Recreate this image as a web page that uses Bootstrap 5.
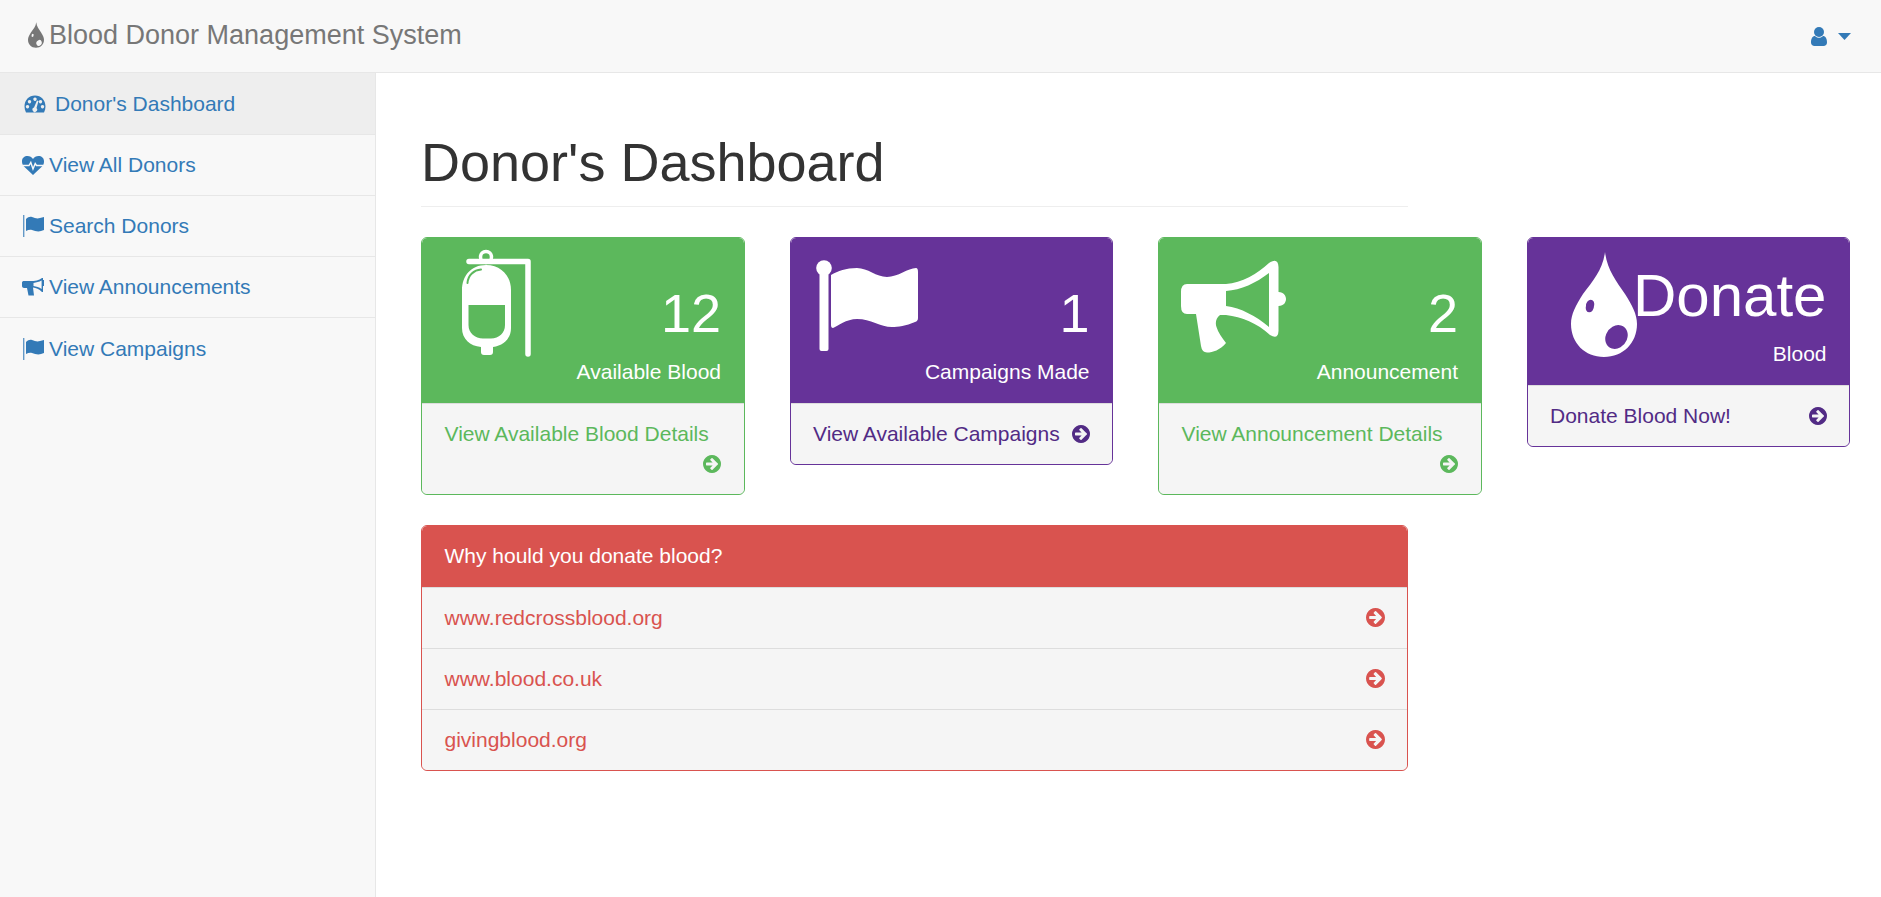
<!DOCTYPE html>
<html lang="en">
<head>
<meta charset="utf-8">
<title>Blood Donor Management System</title>
<link rel="stylesheet" href="https://cdn.jsdelivr.net/npm/bootstrap@5.3.0/dist/css/bootstrap.min.css">
<style>
html,body{height:100%}
body{font-family:"Liberation Sans",Arial,sans-serif;font-size:21px;line-height:30px;color:#333;background:#fff;overflow:hidden}
a{text-decoration:none}
.top-bar{height:73px;padding:0 30px 0 28px;background:#f8f8f8;border-bottom:1px solid #e7e7e7;flex-wrap:nowrap}
.brand-link{font-size:27px;line-height:30px;color:#777;gap:5px;padding:0 0 2px;margin:0}
.brand-link:hover{color:#777}
.brand-drop{width:16px;height:26px;fill:#777}
.user-link{color:#337ab7;gap:11px}
.shell{height:824px}
.side{width:376px;flex:none;background:#f8f8f8;border-right:1px solid #e7e7e7}
.side-item{display:flex;align-items:center;height:61px;padding:0 22px;background:transparent;color:#337ab7;border-radius:0}
.list-group-flush .side-item{border-style:solid;border-color:#e7e7e7;border-width:0 0 1px}
.side-item.now{background:#eee;padding-left:24px;height:62px}
.side-ico{fill:#337ab7;width:22px;height:24px;margin-right:5px;flex:none}
.now .side-ico{margin-right:9px}
.content{flex:1;padding:0 31px 0 45px;min-width:0}
.head-wrap{width:987px;margin:60px 0 30px;padding-bottom:13.5px;border-bottom:1px solid #eee}
.head-wrap h1{font-size:54px;line-height:59.4px;font-weight:500;margin:0;color:#333}
.tile-row{--bs-gutter-x:45px;--bs-gutter-y:0;align-items:flex-start}
.tile{margin-bottom:30px;border-radius:6px;overflow:hidden;background:#f5f5f5}
.tile-head{display:flex;justify-content:space-between;color:#fff;padding:15px 22.5px 15px 0;border:0;border-radius:0;min-height:165px}
.tile-head.head-short{min-height:147px}
.tile-ico{display:block;flex:none;fill:#fff}
.tile-txt{text-align:right;flex:1}
.stat-num{font-size:54px;line-height:87px;padding-top:17px}
.stat-big{font-size:60px;line-height:86px}
.tile-foot{padding:15px 22.5px;background:#f5f5f5;border-top:1px solid #ddd;border-radius:0;display:block}
.tile-foot .float-end{height:30px}
.arrow-ico{width:18px;height:18px;margin-top:6px;display:block;fill:currentColor}
.t-green{border:1px solid #5cb85c}
.t-green .tile-head{background:#5cb85c}
.t-green .tile-foot{color:#5cb85c}
.t-purple{border:1px solid #663399}
.t-purple .tile-head{background:#663399}
.t-purple .tile-foot{color:#522b85}
.ico-bag{width:120px;height:130px;margin:-13px 0 -12px 17px}
.ico-flag{width:102px;height:91px;margin:7px 0 0 25px}
.ico-horn{width:140px;height:120px;margin:-7px 0 0 10px}
.ico-drop{width:66px;height:105px;margin:-1px -10px 0 43px}
.why{width:987px;border:1px solid #d9534f;border-radius:6px;overflow:hidden;background:#f5f5f5}
.why-head{background:#d9534f;color:#fff;padding:15px 22.5px;height:61px;border:0;border-radius:0}
.why-item{display:flex;justify-content:space-between;align-items:center;height:61px;padding:0 22.5px;color:#d9534f;background:#f5f5f5;border-radius:0}
.list-group-flush .why-item{border-style:solid;border-color:#ddd;border-width:1px 0 0}
.why-item .arrow-ico{margin:0;width:19px;height:19px}
</style>
</head>
<body>
<svg width="0" height="0" class="position-absolute">
<defs>
<symbol id="i-arrow" viewBox="0 0 1536 1536"><path d="M1285 768q0-27-18-45l-91-91-362-362q-18-18-45-18t-45 18l-91 91q-18 18-18 45t18 45l189 189h-502q-26 0-45 19t-19 45v128q0 26 19 45t45 19h502l-189 189q-19 19-19 45t19 45l91 91q18 18 45 18t45-18l362-362 91-91q18-18 18-45zm251 0q0 209-103 385.5t-279.5 279.5-385.5 103-385.5-103-279.5-279.5-103-385.5 103-385.5 279.5-279.5 385.5-103 385.5 103 279.5 279.5 103 385.5z"/></symbol>
<symbol id="i-drop" viewBox="0 0 66 105"><path fill-rule="evenodd" d="M34 0C36 17 45 29 54 42C61 53 66 62 66 72C66 91 52 105 33 105C14 105 0 91 0 72C0 62 5 53 12 42C22 29 32 17 34 0ZM15 54a4 5.500 15 1 0 8 0a4 5.500 15 1 0-8 0ZM35 91a10.500 12.500 35 1 0 21-12a10.500 12.500 35 1 0-21 12Z"/></symbol>
<symbol id="i-flag-s" viewBox="0 0 22 24"><rect x="1" y="1" width="1.400" height="22" opacity=".75"/><path d="M4 5C6 3 8 2.500 10 3C13 4 15 5 18 4L22 3V16L19 17C16 18 13 17 10 16C8 15.500 6 16 4 17Z"/></symbol>
</defs>
</svg>

<nav class="navbar top-bar d-flex justify-content-between align-items-center">
  <a class="navbar-brand brand-link d-flex align-items-center" href="#">
    <svg class="brand-drop"><use href="#i-drop"/></svg>Blood Donor Management System
  </a>
  <a class="user-link d-flex align-items-center" href="#" aria-label="User menu">
    <svg width="16" height="19" viewBox="0 0 16 19" fill="currentColor"><circle cx="8" cy="5" r="5"/><path d="M0 15.500C0 11.500 1.500 9 4 9C5 10.200 6.500 10.800 8 10.800C9.500 10.800 11 10.200 12 9C14.500 9 16 11.500 16 15.500C16 17.800 14.500 19 12.500 19H3.500C1.500 19 0 17.800 0 15.500Z"/></svg>
    <svg width="13" height="7" viewBox="0 0 13 7" fill="currentColor"><path d="M0 0H13L6.500 7Z"/></svg>
  </a>
</nav>

<div class="shell d-flex">
  <aside class="side">
    <div class="list-group list-group-flush">
      <a class="list-group-item side-item now" href="#">
        <svg class="side-ico" viewBox="0 0 22 24"><path fill-rule="evenodd" d="M11 3.500C17 3.500 21.500 8 21.500 14.500C21.500 16.500 21 18.500 20 20.500H2C1 18.500 .5 16.500 .5 14.500C.5 8 5 3.500 11 3.500ZM11 5.500a1.700 1.700 0 1 0 .01 0ZM5.500 8a1.700 1.700 0 1 0 .01 0ZM16.500 8a1.700 1.700 0 1 0 .01 0ZM3.500 13a1.700 1.700 0 1 0 .01 0ZM18.500 13a1.700 1.700 0 1 0 .01 0ZM13 8.500L10 15.500a2.300 2.300 0 1 0 2.500 .6L14.500 9Z"/></svg>Donor's Dashboard
      </a>
      <a class="list-group-item side-item" href="#">
        <svg class="side-ico" viewBox="0 0 22 24"><path d="M11 22L2 13.500C0 11.500 0 9.500 0 8C0 5 2.500 3 5.500 3C7.800 3 9.800 4.300 11 6C12.200 4.300 14.200 3 16.500 3C19.500 3 22 5 22 8C22 9.500 22 11.500 20 13.500Z"/><path d="M.5 12.500H7L8.800 9.500L11 16L13.200 10.500L14.500 12.500H21.500" fill="none" stroke="#f8f8f8" stroke-width="1.400"/></svg>View All Donors
      </a>
      <a class="list-group-item side-item" href="#">
        <svg class="side-ico"><use href="#i-flag-s"/></svg>Search Donors
      </a>
      <a class="list-group-item side-item" href="#">
        <svg class="side-ico" viewBox="0 0 22 24"><path fill-rule="evenodd" d="M20 3H21V5H22V11H21V17H20C17 14 14 12.800 11 12.500L12 20.500H6.500L5 13H2C1 13 0 12 0 11V7.500C0 6.500 1 6 2 6H8C13 6 17 5.500 20 3ZM19.600 5.600C17 7 14.500 7.600 11.500 7.900V11C14.500 11.400 17 12.300 19.600 14Z"/></svg>View Announcements
      </a>
      <a class="list-group-item side-item" href="#">
        <svg class="side-ico"><use href="#i-flag-s"/></svg>View Campaigns
      </a>
    </div>
  </aside>

  <main class="content">
    <div class="head-wrap"><h1>Donor's Dashboard</h1></div>

    <div class="row tile-row">
      <div class="col-3">
        <div class="card tile t-green">
          <div class="card-header tile-head">
            <svg class="tile-ico ico-bag" viewBox="0 0 120 130">
              <path d="M30 21.500H89V114" fill="none" stroke="#fff" stroke-width="5.500" stroke-linecap="round" stroke-linejoin="round"/>
              <circle cx="47" cy="17" r="5.500" fill="none" stroke="#fff" stroke-width="3.500"/>
              <path fill-rule="evenodd" d="M47 25C62 25 72 36 72 50V88C72 99 64 106 54 107V112Q54 115 51 115H45Q42 115 42 112V107C31 106 23 99 23 88V50C23 36 32 25 47 25ZM29.500 65V85C29.500 93 36 98.500 44 98.500H52C60 98.500 66 93 66 85V65Z"/>
              <path d="M28.500 43C29 35 35 30 42 29.500" fill="none" stroke="#5cb85c" stroke-width="2" stroke-linecap="round"/>
            </svg>
            <div class="tile-txt">
              <div class="stat-num">12</div>
              <div>Available Blood</div>
            </div>
          </div>
          <a class="card-footer tile-foot clearfix" href="#">
            <span class="float-start">View Available Blood Details</span>
            <span class="float-end"><svg class="arrow-ico"><use href="#i-arrow"/></svg></span>
          </a>
        </div>
      </div>

      <div class="col-3">
        <div class="card tile t-purple">
          <div class="card-header tile-head">
            <svg class="tile-ico ico-flag" viewBox="0 0 102 91">
              <circle cx="8" cy="8" r="7.800"/>
              <rect x="3.500" y="10" width="9" height="81" rx="2"/>
              <path d="M15 15C22 11 30 8 41 8C52 8 60 17 71 17C82 17 92 8 100 8Q102 8 102 12V58Q102 61 99 62C90 66 82 67 76 67C64 67 55 59 41 59C30 59 22 66 17 68Q15 68 15 65Z"/>
            </svg>
            <div class="tile-txt">
              <div class="stat-num">1</div>
              <div>Campaigns Made</div>
            </div>
          </div>
          <a class="card-footer tile-foot clearfix" href="#">
            <span class="float-start">View Available Campaigns</span>
            <span class="float-end"><svg class="arrow-ico"><use href="#i-arrow"/></svg></span>
          </a>
        </div>
      </div>

      <div class="col-3">
        <div class="card tile t-green">
          <div class="card-header tile-head">
            <svg class="tile-ico ico-horn" viewBox="0 0 140 120">
              <path fill-rule="evenodd" d="M18 38H57C73 37 88 28 100 17Q109 11 109.500 21V46C115 46 117 50 117 53C117 56 115 60 109.500 60V85Q109 94 101 89C88 77 73 71 57 69H51C47 72 46 77 47.500 81C49 86 53 92 57 97C51 104 44 106.500 38 106.500Q33 106.500 32 100L27 68H18Q12 68 12 60V46Q12 38 18 38ZM57 45V60C72 62 87 70 100 81V27C87 37 72 44 57 45Z"/>
            </svg>
            <div class="tile-txt">
              <div class="stat-num">2</div>
              <div>Announcement</div>
            </div>
          </div>
          <a class="card-footer tile-foot clearfix" href="#">
            <span class="float-start">View Announcement Details</span>
            <span class="float-end"><svg class="arrow-ico"><use href="#i-arrow"/></svg></span>
          </a>
        </div>
      </div>

      <div class="col-3">
        <div class="card tile t-purple">
          <div class="card-header tile-head head-short">
            <svg class="tile-ico ico-drop"><use href="#i-drop"/></svg>
            <div class="tile-txt">
              <div class="stat-big">Donate</div>
              <div>Blood</div>
            </div>
          </div>
          <a class="card-footer tile-foot clearfix" href="#">
            <span class="float-start">Donate Blood Now!</span>
            <span class="float-end"><svg class="arrow-ico"><use href="#i-arrow"/></svg></span>
          </a>
        </div>
      </div>
    </div>

    <div class="card why">
      <div class="card-header why-head">Why hould you donate blood?</div>
      <div class="list-group list-group-flush">
        <a class="list-group-item why-item" href="#"><span>www.redcrossblood.org</span><svg class="arrow-ico"><use href="#i-arrow"/></svg></a>
        <a class="list-group-item why-item" href="#"><span>www.blood.co.uk</span><svg class="arrow-ico"><use href="#i-arrow"/></svg></a>
        <a class="list-group-item why-item" href="#"><span>givingblood.org</span><svg class="arrow-ico"><use href="#i-arrow"/></svg></a>
      </div>
    </div>
  </main>
</div>
<script src="https://cdn.jsdelivr.net/npm/bootstrap@5.3.0/dist/js/bootstrap.bundle.min.js"></script>
</body>
</html>
